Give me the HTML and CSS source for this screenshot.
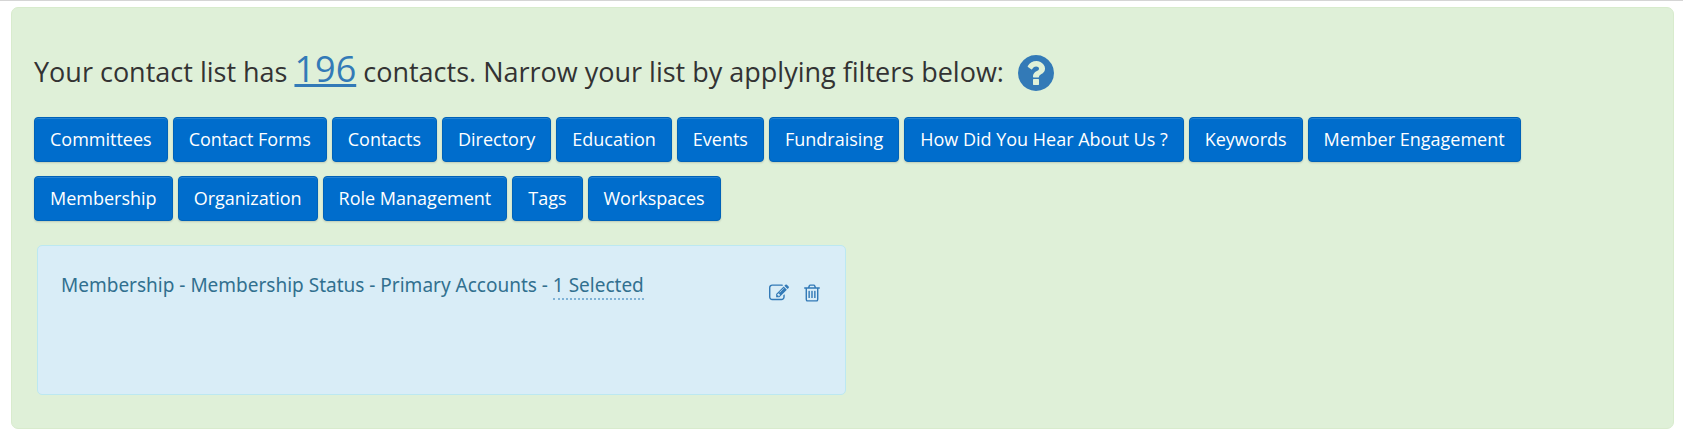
FILE: index.html
```html
<!DOCTYPE html>
<html lang="en">
<head>
<meta charset="utf-8">
<title>Contact filters</title>
<link rel="stylesheet" href="styles.css">
</head>
<body>
<main class="panel">
  <h1 class="summary">
    <span>Your contact list has <a class="count" href="#contacts">196</a> contacts. Narrow your list by applying filters below:</span>
    <a class="help" href="#help" aria-label="Help"><svg class="help-icon" viewBox="128 128 1536 1536" aria-hidden="true"><path d="M1024 1376v-192q0-14-9-23t-23-9h-192q-14 0-23 9t-9 23v192q0 14 9 23t23 9h192q14 0 23-9t9-23zm256-672q0-88-55.5-163t-138.5-116-170-41q-243 0-371 213-15 24 8 42l132 100q7 6 19 6 16 0 25-12 53-68 86-92 34-24 86-24 48 0 85.5 26t37.5 59q0 38-20 61t-68 45q-63 28-115.5 86.5t-52.5 125.5v36q0 14 9 23t23 9h192q14 0 23-9t9-23q0-19 21.5-49.5t54.5-49.5q32-18 49-28.5t46-35 44.5-48 28-60.5 12.5-81zm384 192q0 209-103 385.5t-279.5 279.5-385.5 103-385.5-103-279.5-279.5-103-385.5 103-385.5 279.5-279.5 385.5-103 385.5 103 279.5 279.5 103 385.5z"/></svg></a>
  </h1>
  <div class="filters">
    <button class="filter" type="button">Committees</button>
    <button class="filter" type="button">Contact Forms</button>
    <button class="filter" type="button">Contacts</button>
    <button class="filter" type="button">Directory</button>
    <button class="filter" type="button">Education</button>
    <button class="filter" type="button">Events</button>
    <button class="filter" type="button">Fundraising</button>
    <button class="filter" type="button">How Did You Hear About Us ?</button>
    <button class="filter" type="button">Keywords</button>
    <button class="filter" type="button">Member Engagement</button>
    <button class="filter" type="button">Membership</button>
    <button class="filter" type="button">Organization</button>
    <button class="filter" type="button">Role Management</button>
    <button class="filter" type="button">Tags</button>
    <button class="filter" type="button">Workspaces</button>
  </div>
  <section class="applied">
    <p class="applied-text">Membership - Membership Status - Primary Accounts - <span class="selected">1 Selected</span></p>
    <div class="actions">
      <button class="action" type="button" aria-label="Edit filter"><svg class="action-icon" viewBox="0 0 1792 1792" aria-hidden="true"><path d="M888 1184l116-116-152-152-116 116v56h96v96h56zm440-720q-16-16-33 1l-350 350q-17 17-1 33t33-1l350-350q17-17 1-33zm80 594v190q0 119-84.5 203.5t-203.5 84.5h-832q-119 0-203.5-84.5t-84.5-203.5v-832q0-119 84.5-203.5t203.5-84.5h832q63 0 117 25 15 7 18 23 3 17-9 29l-49 49q-14 14-32 8-23-6-45-6h-832q-66 0-113 47t-47 113v832q0 66 47 113t113 47h832q66 0 113-47t47-113v-126q0-13 9-22l64-64q15-15 35-7t20 29zm-96-738l288 288-672 672h-288v-288zm444 132l-92 92-288-288 92-92q28-28 68-28t68 28l152 152q28 28 28 68t-28 68z"/></svg></button>
      <button class="action" type="button" aria-label="Delete filter"><svg class="action-icon" viewBox="0 0 1792 1792" aria-hidden="true"><path d="M704 736v576q0 14-9 23t-23 9h-64q-14 0-23-9t-9-23v-576q0-14 9-23t23-9h64q14 0 23 9t9 23zm256 0v576q0 14-9 23t-23 9h-64q-14 0-23-9t-9-23v-576q0-14 9-23t23-9h64q14 0 23 9t9 23zm256 0v576q0 14-9 23t-23 9h-64q-14 0-23-9t-9-23v-576q0-14 9-23t23-9h64q14 0 23 9t9 23zm128 724v-948h-896v948q0 22 7 40.5t14.5 27 10.5 8.5h832q3 0 10.5-8.5t14.5-27 7-40.5zm-672-1076h448l-48-117q-7-9-17-11h-317q-10 2-17 11zm928 32v64q0 14-9 23t-23 9h-96v948q0 83-47 143.5t-113 60.5h-832q-66 0-113-58.5t-47-141.5v-952h-96q-14 0-23-9t-9-23v-64q0-14 9-23t23-9h309l70-167q15-37 54-63t79-26h320q40 0 79 26t54 63l70 167h309q14 0 23 9t9 23z"/></svg></button>
    </div>
  </section>
</main>
</body>
</html>
```
FILE: styles.css
```css
* {
  box-sizing: border-box;
}

body {
  margin: 0;
  padding: 6px 9px 7px 11px;
  border-top: 1px solid #d5d5d5;
  background: #fff;
  color: #333;
  font-family: "Open Sans", sans-serif;
}

.panel {
  padding: 33px 22px;
  border: 1px solid #d8ebcd;
  border-radius: 7px;
  background: #dff0d8;
}

.summary {
  display: flex;
  align-items: center;
  gap: 14px;
  margin: 0 0 18px;
  font-size: 27px;
  font-weight: 400;
  line-height: 55px;
}

.count {
  color: #337ab7;
  font-size: 36px;
}

.help {
  display: flex;
  padding-top: 6px;
  color: #337ab7;
}

.help-icon {
  width: 36px;
  height: 36px;
  fill: currentColor;
}

.filters {
  display: flex;
  flex-wrap: wrap;
  gap: 14px 5px;
}

.filter {
  padding: 9px 15px;
  border: 1px solid #0062b8;
  border-radius: 4px;
  background: #006dcc;
  box-shadow: inset 0 1px 0 rgba(255, 255, 255, 0.15), 0 1px 2px rgba(0, 0, 0, 0.15);
  color: #fff;
  font: 500 18px/25px "Open Sans", sans-serif;
}

.applied {
  display: flex;
  justify-content: space-between;
  width: 50%;
  min-height: 150px;
  margin: 24px 0 0 3px;
  padding: 23px;
  border: 1px solid #bce8f1;
  border-radius: 5px;
  background: #d9edf7;
  color: #31708f;
}

.applied-text {
  margin: 0;
  font-family: "Noto Sans", "Open Sans", sans-serif;
  font-size: 19px;
  line-height: 32px;
}

.selected {
  border-bottom: 2px dotted #7fb2d6;
}

.actions {
  display: flex;
  align-items: flex-start;
  gap: 13px;
  padding-top: 14px;
}

.action {
  display: flex;
  padding: 0;
  border: 0;
  background: none;
  color: #337ab7;
}

.action-icon {
  width: 20px;
  height: 20px;
  fill: currentColor;
}
```
